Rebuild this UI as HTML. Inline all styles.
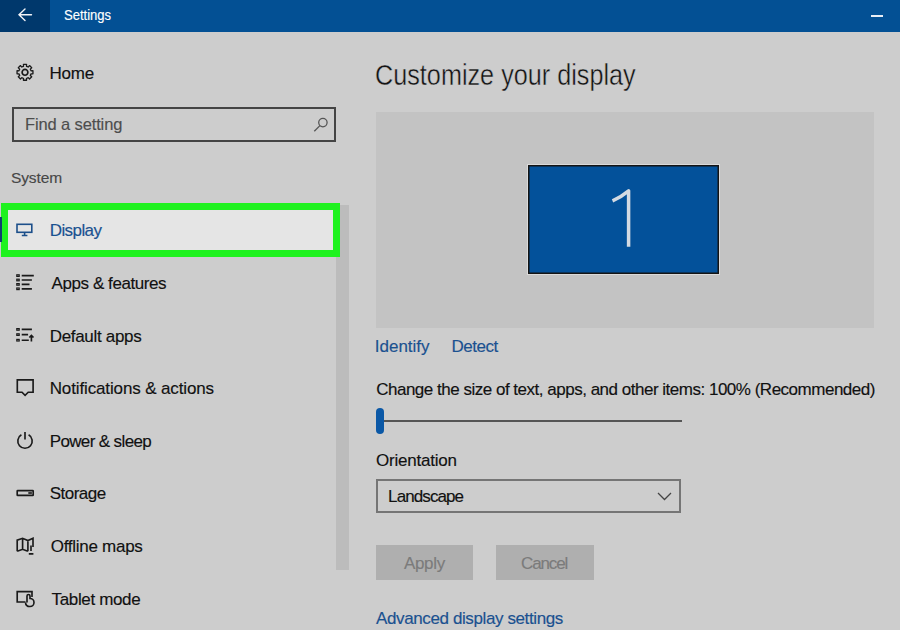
<!DOCTYPE html>
<html><head><meta charset="utf-8"><style>
html,body{margin:0;padding:0;}
body{width:900px;height:630px;overflow:hidden;position:relative;background:#cdcdcd;font-family:"Liberation Sans",sans-serif;}
.a{position:absolute;box-sizing:border-box;}
.t{position:absolute;white-space:nowrap;-webkit-text-stroke:0.15px currentColor;}
svg{position:absolute;overflow:visible;}
</style></head><body>
<div class="a" style="left:0;top:0;width:900px;height:32px;background:#035094"></div>
<div class="a" style="left:0;top:0;width:50px;height:32px;background:#00386c"></div>
<svg style="left:0;top:0" width="900" height="32"><g fill="none" stroke="#f2f4f8" stroke-width="1.4" stroke-linecap="round">
<path d="M19 14.8H31.5M25 9L19 14.8L25 20.6"/></g>
<rect x="871" y="15" width="12" height="2" fill="#e8eef6"/></svg>
<div class="a" style="left:12px;top:107px;width:324px;height:35px;border:2px solid #444"></div>
<svg style="left:0;top:0" width="900" height="630"><g fill="none" stroke="#555" stroke-width="1.3">
<circle cx="322.9" cy="122.6" r="4.2"/><path d="M314.3 131.2L319.9 125.6"/></g></svg>
<div class="a" style="left:336px;top:205px;width:13px;height:365px;background:#bcbcbc"></div>
<div class="a" style="left:1px;top:203px;width:339px;height:54px;border:7px solid #1ff21f;background:#e5e5e5"></div>
<div class="a" style="left:0;top:217px;width:1.5px;height:25px;background:#123f70"></div>
<svg style="left:0;top:0" width="900" height="630"><g fill="none" stroke="#1a1a1a" stroke-width="1.65">
<!-- gear -->
<g transform="translate(25,72.3)"><circle r="2.9"/>
</g><path d="M22.63 66.57L23.50 66.28L23.45 64.35L26.55 64.35L26.50 66.28L27.37 66.57L28.19 66.99L29.53 65.58L31.72 67.77L30.31 69.11L30.73 69.93L31.02 70.80L32.95 70.75L32.95 73.85L31.02 73.80L30.73 74.67L30.31 75.49L31.72 76.83L29.53 79.02L28.19 77.61L27.37 78.03L26.50 78.32L26.55 80.25L23.45 80.25L23.50 78.32L22.63 78.03L21.81 77.61L20.47 79.02L18.28 76.83L19.69 75.49L19.27 74.67L18.98 73.80L17.05 73.85L17.05 70.75L18.98 70.80L19.27 69.93L19.69 69.11L18.28 67.77L20.47 65.58L21.81 66.99Z" stroke-linejoin="round" stroke-width="1.3"/>
<!-- display icon -->
<g stroke="#1c4f8a" stroke-width="1.6"><rect x="17" y="224.3" width="14.8" height="8"/><path d="M24.6 233V235M21.8 235.5H27.4"/></g>
<!-- apps -->
<g><rect x="16.8" y="274.8" width="2.4" height="1.6" stroke-width="1.2"/><rect x="16.8" y="279.2" width="2.4" height="1.6" stroke-width="1.2"/><rect x="16.8" y="283.6" width="2.4" height="1.6" stroke-width="1.2"/><rect x="16.8" y="288" width="2.4" height="1.6" stroke-width="1.2"/>
<path d="M21.7 275.6H33.8M21.7 280H31.9M21.7 284.4H29.5M21.7 288.8H31.9"/></g>
<!-- default apps -->
<g><rect x="16.8" y="328.6" width="2.4" height="1.6" stroke-width="1.2"/><rect x="16.8" y="333.8" width="2.4" height="1.6" stroke-width="1.2"/><rect x="16.8" y="339.4" width="2.4" height="1.6" stroke-width="1.2"/>
<path d="M21.7 329.4H31.9M21.7 334.6H28.1M21.7 340.2H28.8M31.4 341.4V335.4M29.3 337.5L31.4 335.4L33.5 337.5"/></g>
<!-- notifications -->
<path d="M17.3 379.8H33.1V392.2H28.2L25.1 395.3L22 392.2H17.3Z"/>
<!-- power -->
<path d="M21.4 434.8A7.2 7.2 0 1 0 28.6 434.8M25 432V439.5"/>
<!-- storage -->
<rect x="17.2" y="490.6" width="16" height="4.8" rx="0.5"/><path d="M28.3 493H31.9"/>
<!-- offline maps -->
<path d="M17.2 551.2V540.2L22.6 538.3L27.9 540.5L33 538.2V547M31 545.5V551M28.8 553.9H33.4M27.9 551.3L22.6 549.3L17.2 551.2M22.6 538.3V549.3M27.9 540.5V551.3"/>
<!-- tablet -->
<path d="M25.5 602H17.2V591.6H32V597"/><path d="M27 602.5V596A1.5 1.5 0 0 1 30 596V598.5A4 4 0 0 1 30 606.5A4 4 0 0 1 25.5 602.5"/>
</g></svg>
<div class="a" style="left:376px;top:112px;width:498px;height:216px;background:#c3c3c3"></div>
<div class="a" style="left:527px;top:164px;width:193px;height:111px;border:1px solid #dadada"></div>
<svg style="left:0;top:0" width="900" height="630"><rect x="528" y="165" width="191" height="109" fill="#141414"/><rect x="529.5" y="166.5" width="188" height="106" fill="#03519a"/></svg>
<svg style="left:0;top:0" width="900" height="630"><path d="M612.5 200.8Q620.5 197.5 628.6 190.8V246.7" fill="none" stroke="#d4dae2" stroke-width="3.5" stroke-linejoin="round"/></svg>
<div class="a" style="left:384px;top:419.5px;width:298px;height:2px;background:#555"></div>
<div class="a" style="left:375.5px;top:408px;width:8.5px;height:26px;border-radius:4.25px;background:#0b58a6"></div>
<div class="a" style="left:376px;top:479px;width:305px;height:34px;border:2px solid #757575"></div>
<svg style="left:0;top:0" width="900" height="630"><path d="M658 493L664.5 499.5L671 493" fill="none" stroke="#444" stroke-width="1.25"/></svg>
<div class="a" style="left:376px;top:544.5px;width:97px;height:35px;background:#afafaf"></div>
<div class="a" style="left:496px;top:544.5px;width:98px;height:35px;background:#afafaf"></div>
<div class="t" style="left:63.6px;top:7.7px;font-size:14.5px;line-height:14.5px;transform:scaleX(0.8998);transform-origin:0 0;color:#ffffff">Settings</div>
<div class="t" style="left:49.5px;top:64.8px;font-size:17px;line-height:17px;letter-spacing:-0.23px;color:#111111">Home</div>
<div class="t" style="left:25.0px;top:115.9px;font-size:16.5px;line-height:16.5px;letter-spacing:-0.13px;color:#4d4d4d">Find a setting</div>
<div class="t" style="left:10.9px;top:170.4px;font-size:15.5px;line-height:15.5px;letter-spacing:-0.06px;color:#474747">System</div>
<div class="t" style="left:49.7px;top:222.3px;font-size:17px;line-height:17px;letter-spacing:-0.58px;color:#1a5190">Display</div>
<div class="t" style="left:51.6px;top:275.0px;font-size:17px;line-height:17px;letter-spacing:-0.43px;color:#111111">Apps &amp; features</div>
<div class="t" style="left:49.7px;top:328.0px;font-size:17px;line-height:17px;letter-spacing:-0.31px;color:#111111">Default apps</div>
<div class="t" style="left:49.7px;top:380.4px;font-size:17px;line-height:17px;letter-spacing:-0.13px;color:#111111">Notifications &amp; actions</div>
<div class="t" style="left:49.7px;top:432.7px;font-size:17px;line-height:17px;letter-spacing:-0.63px;color:#111111">Power &amp; sleep</div>
<div class="t" style="left:49.7px;top:485.4px;font-size:17px;line-height:17px;letter-spacing:-0.52px;color:#111111">Storage</div>
<div class="t" style="left:50.7px;top:538.3px;font-size:17px;line-height:17px;letter-spacing:-0.27px;color:#111111">Offline maps</div>
<div class="t" style="left:51.6px;top:590.6px;font-size:17px;line-height:17px;letter-spacing:-0.36px;color:#111111">Tablet mode</div>
<div class="t" style="left:375.1px;top:61.0px;font-size:29px;line-height:29px;transform:scaleX(0.8696);transform-origin:0 0;-webkit-text-stroke:0.45px #cdcdcd;color:#141414">Customize your display</div>
<div class="t" style="left:374.8px;top:337.7px;font-size:17px;line-height:17px;letter-spacing:-0.01px;color:#1a5190">Identify</div>
<div class="t" style="left:451.5px;top:337.7px;font-size:17px;line-height:17px;letter-spacing:-0.46px;color:#1a5190">Detect</div>
<div class="t" style="left:376.2px;top:381.1px;font-size:17px;line-height:17px;letter-spacing:-0.49px;color:#111111">Change the size of text, apps, and other items: 100% (Recommended)</div>
<div class="t" style="left:376.0px;top:451.7px;font-size:17px;line-height:17px;letter-spacing:-0.23px;color:#111111">Orientation</div>
<div class="t" style="left:388.1px;top:487.7px;font-size:17px;line-height:17px;letter-spacing:-0.9px;color:#111111">Landscape</div>
<div class="t" style="left:403.9px;top:554.9px;font-size:17px;line-height:17px;letter-spacing:-0.32px;color:#7b7b7b">Apply</div>
<div class="t" style="left:521.1px;top:554.9px;font-size:17px;line-height:17px;letter-spacing:-1.16px;color:#7b7b7b">Cancel</div>
<div class="t" style="left:376.1px;top:610.4px;font-size:17px;line-height:17px;letter-spacing:-0.39px;color:#1a5190">Advanced display settings</div>
</body></html>
